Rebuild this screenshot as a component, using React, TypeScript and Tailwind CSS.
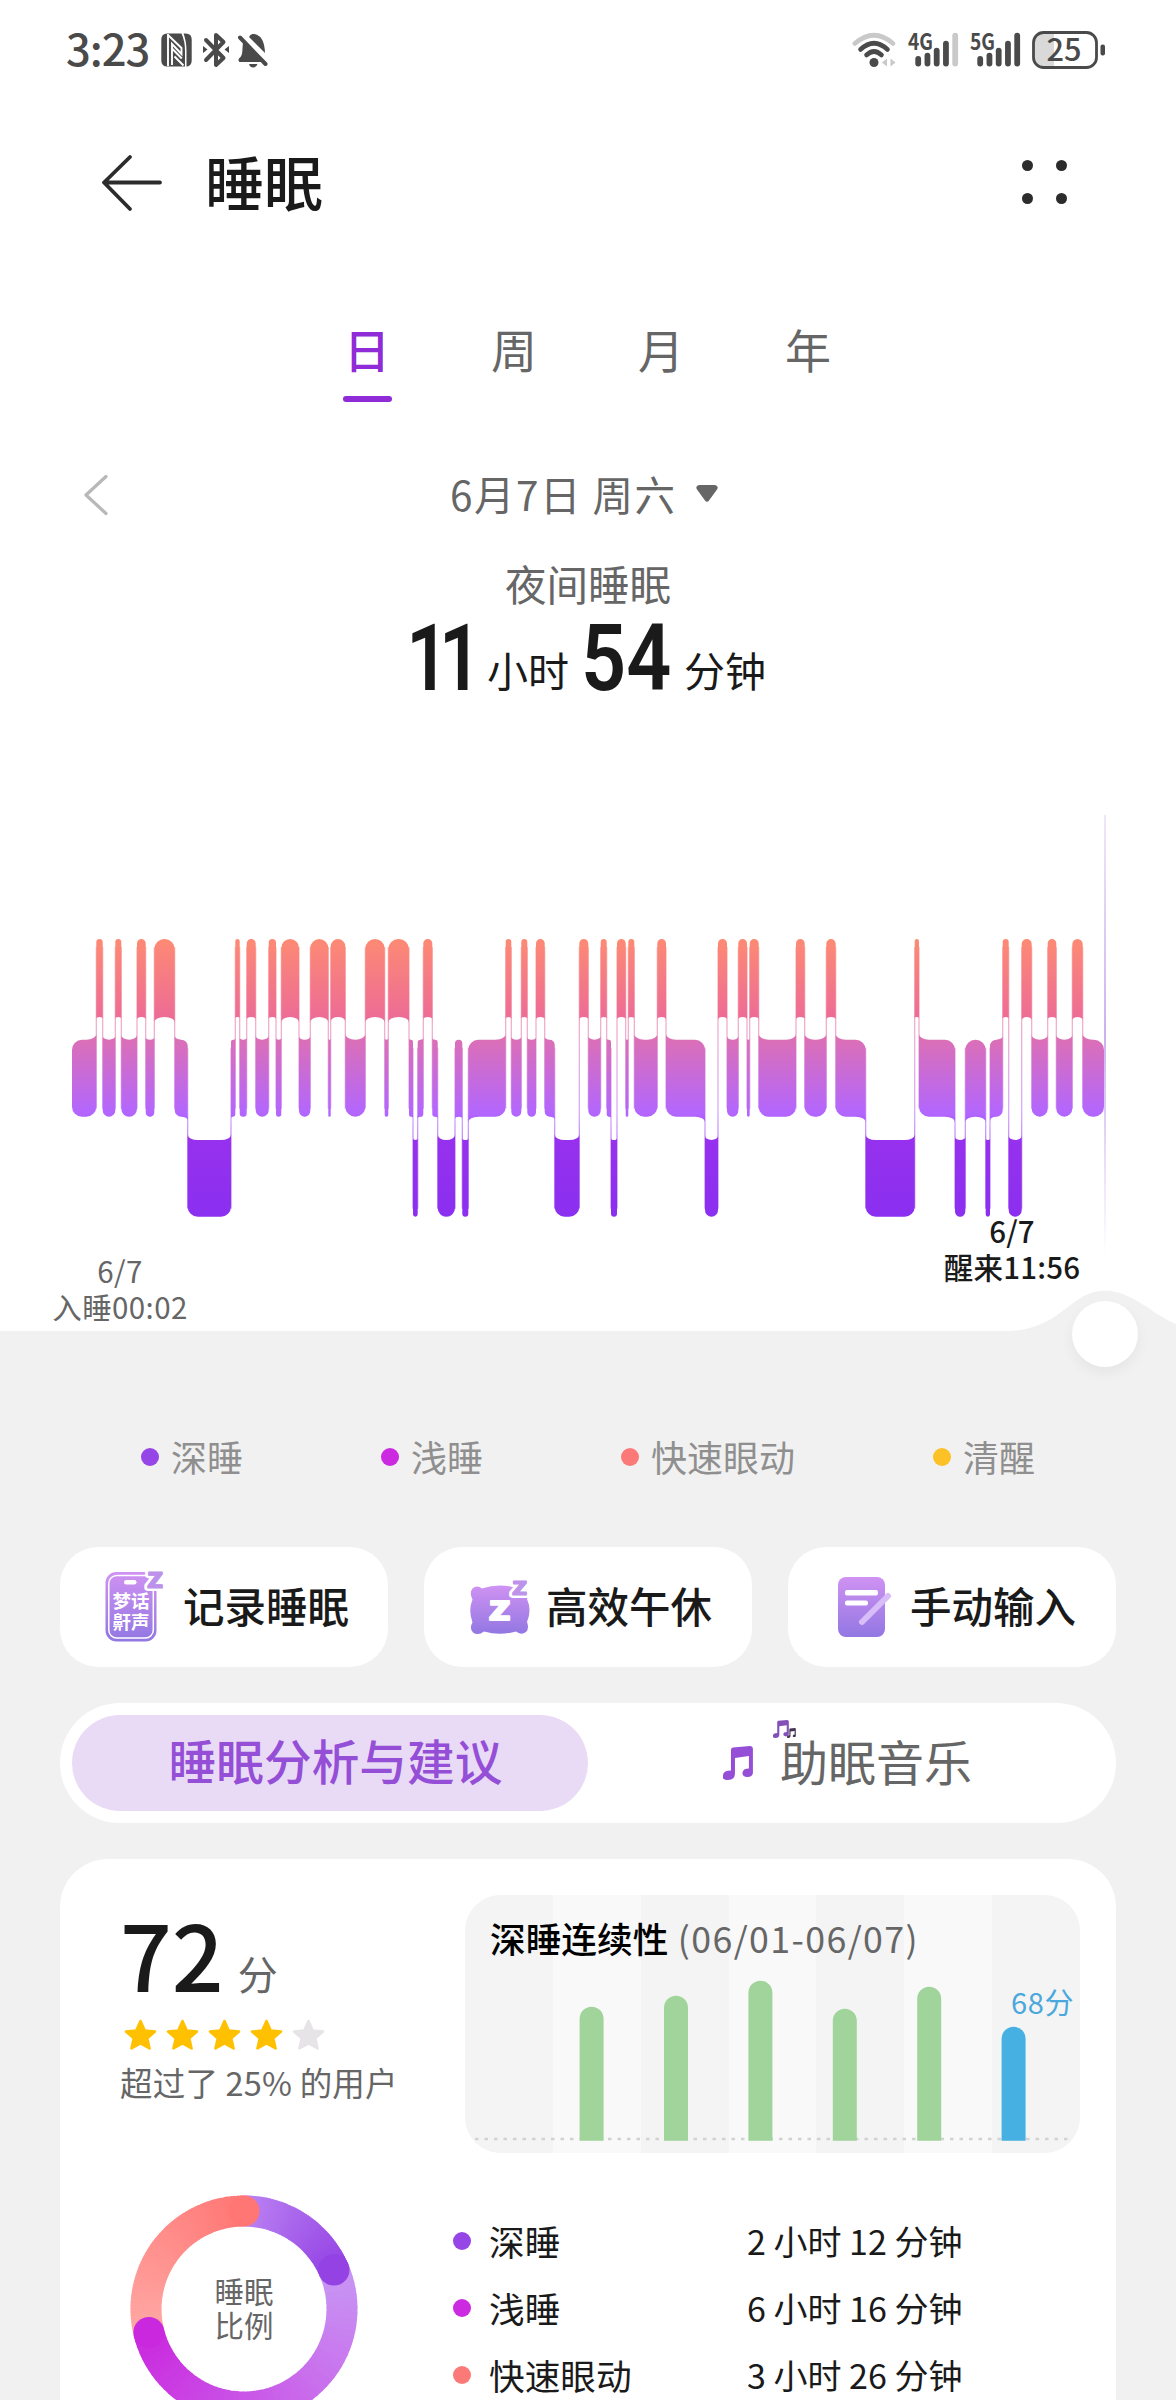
import React from "react";

type Level = "R" | "L" | "D";

const START = 72;

/* Sleep stages through the night: stage and the x where it ends. */
const STAGES: [Level, number][] = [
  ["L", 96.3], ["R", 102.7], ["L", 115.3], ["R", 121.3], ["L", 137], ["R", 145.7], ["L", 154.3], ["R", 174.7],
  ["L", 187.7], ["D", 231], ["L", 235.3], ["R", 239.7], ["L", 246.7], ["R", 255.7], ["L", 268.7], ["R", 276],
  ["L", 281.3], ["R", 299], ["L", 310.3], ["R", 328.3], ["L", 330.7], ["R", 345.3], ["L", 365.3], ["R", 384.7],
  ["L", 388.3], ["R", 409], ["L", 413], ["D", 417.7], ["L", 423.3], ["R", 432.3], ["L", 437.7], ["D", 455],
  ["L", 462.3], ["D", 468.3], ["L", 505.7], ["R", 511.3], ["L", 521.3], ["R", 527.3], ["L", 536], ["R", 544.7],
  ["L", 554.7], ["D", 579.3], ["R", 588.3], ["L", 600.7], ["R", 606.7], ["L", 611], ["D", 617], ["R", 625.7],
  ["L", 628.3], ["R", 634.3], ["L", 657.3], ["R", 666], ["L", 705], ["D", 718], ["R", 727], ["L", 738.3],
  ["R", 747], ["L", 749.7], ["R", 758.7], ["L", 796], ["R", 804.7], ["L", 826.3], ["R", 835.7], ["L", 865.7],
  ["D", 914.7], ["R", 919], ["L", 955], ["D", 965.3], ["L", 985.7], ["D", 990], ["L", 1002.7], ["R", 1008.7],
  ["D", 1021.7], ["R", 1031.7], ["L", 1047.7], ["R", 1056.3], ["L", 1072.3], ["R", 1082.7], ["L", 1104],
];

/* Top, bottom and rank of each stage's band. */
const BAND: Record<Level, [number, number, number]> = {
  R: [19, 97, 2],
  L: [119.7, 196.7, 1],
  D: [220, 296.7, 0],
};

function blockPath(i: number) {
  const [lvl, x1] = STAGES[i];
  const x0 = i === 0 ? START : STAGES[i - 1][1];
  const [t, b, rank] = BAND[lvl];
  const left = i === 0 ? null : BAND[STAGES[i - 1][0]][2];
  const right = i === STAGES.length - 1 ? null : BAND[STAGES[i + 1][0]][2];
  const r = Math.min(10, (x1 - x0) / 2);
  const f = Math.min(5.5, r * 0.6);
  const leftUp = left !== null && left > rank;
  const rightUp = right !== null && right > rank;
  const leftDown = left !== null && left < rank;
  const rightDown = right !== null && right < rank;
  const arc = (flare: boolean, x: number, y: number) => `A${r},${flare ? f : r} 0 0 ${flare ? 0 : 1} ${x},${y}`;
  return [
    `M${x0},${leftUp ? t - f : t + r}`,
    arc(leftUp, x0 + r, t),
    `L${x1 - r},${t}`,
    arc(rightUp, x1, rightUp ? t - f : t + r),
    `L${x1},${rightDown ? b + f : b - r}`,
    arc(rightDown, x1 - r, b),
    `L${x0 + r},${b}`,
    arc(leftDown, x0, leftDown ? b + f : b - r),
    "Z",
  ].join(" ");
}

function SleepChart() {
  return (
    <svg width="1176" height="350" viewBox="0 0 1176 350" className="block">
      <defs>
        <linearGradient id="night" gradientUnits="userSpaceOnUse" x1="0" y1="19" x2="0" y2="297">
          <stop offset="0" stopColor="#fd8a74" />
          <stop offset="0.28" stopColor="#ed6c95" />
          <stop offset="0.37" stopColor="#da6fb9" />
          <stop offset="0.63" stopColor="#b266ff" />
          <stop offset="0.72" stopColor="#9631ee" />
          <stop offset="1" stopColor="#8b2ff0" />
        </linearGradient>
      </defs>
      {STAGES.slice(0, -1).map(([lvl, x], i) => {
        const a = BAND[lvl];
        const b = BAND[STAGES[i + 1][0]];
        return (
          <rect
            key={i}
            x={x - 0.6}
            y={Math.min(a[0], b[0]) + 8}
            width="1.2"
            height={Math.max(a[1], b[1]) - Math.min(a[0], b[0]) - 16}
            fill="url(#night)"
            opacity="0.6"
          />
        );
      })}
      {STAGES.map((_, i) => (
        <path key={i} d={blockPath(i)} fill="url(#night)" />
      ))}
    </svg>
  );
}

function Signal({ label, weak }: { label: string; weak?: boolean }) {
  const tops = [24, 20.7, 15.7, 8.7, 0.7];
  return (
    <svg width="52" height="36" viewBox="0 0 52 36" className="block overflow-visible">
      <text x="0" y="17.5" fontSize="23" fontWeight="700" textLength="25" lengthAdjust="spacingAndGlyphs" fill="#4a4a4a">
        {label}
      </text>
      {tops.map((t, i) => (
        <rect key={i} x={7.3 + i * 9.25} y={t} width="5.8" height={34.5 - t} rx="2.9" fill={weak && i === 4 ? "#c9c9c9" : "#4a4a4a"} />
      ))}
    </svg>
  );
}

function StatusBar() {
  return (
    <div className="flex h-[100px] items-center pl-[66px] text-[#4a4a4a]">
      <span className="-mt-[4px] w-[95px] text-[43.5px] leading-[60px] font-medium tracking-[-1px]">3:23</span>
      <svg width="31" height="34" viewBox="0 0 31 34" className="block shrink-0">
        <path d="M6.300 .5H20.500Q24 8 24 18V33.500H6.300Q.3 33.500 .3 27.500V6.500Q.3 .5 6.300 .5Z" fill="#4a4a4a" />
        <path d="M22.500 .5H24.700Q30.700 .5 30.700 6.500V27.500Q30.700 33.500 24.700 33.500H25.500V18Q25.500 8 22.500 .5Z" fill="#4a4a4a" />
        <path d="M7 1V33M7.500 2.500 20.500 15V21L11 11V32M11 15.500 20.800 25.500M13.500 23.500 22.500 32.500" stroke="#fff" strokeWidth="1.900" fill="none" />
      </svg>
      <svg width="26" height="36" viewBox="0 0 26 36" className="ml-[11px] block shrink-0">
        <path d="M3 8 20.500 26 13 33V3l7.500 7L3 28" fill="none" stroke="#4a4a4a" strokeWidth="4" strokeLinejoin="round" strokeLinecap="round" />
        <path d="M0 14v7l4.500-3.500ZM26 14v7l-4.500-3.500Z" fill="#4a4a4a" />
      </svg>
      <svg width="30" height="36" viewBox="0 0 30 36" className="ml-[9px] block shrink-0">
        <path d="M11 5q1-2.500 3.500-3h2q10 2 10.500 19Z" fill="#4a4a4a" />
        <path d="M5 10l20 20H1.500q-2.500-2.500 1-5 2-2.500 2-9Z" fill="#4a4a4a" />
        <path d="M2 5.500 27.500 32" stroke="#4a4a4a" strokeWidth="4" strokeLinecap="round" />
        <path d="M11 32h8.500q-1 3.500-4.250 3.500T11 32Z" fill="#4a4a4a" />
      </svg>
      <div className="ml-auto flex items-center pr-[70px]">
        <svg width="45" height="36" viewBox="0 0 45 36" className="block">
          <g fill="none" strokeLinecap="round" strokeWidth="4.600">
            <path d="M2.800 11.500Q22 -5 41 11.500" stroke="#c9c9c9" />
            <path d="M8.500 17.500Q22 5 35.500 17.500" stroke="#4a4a4a" />
            <path d="M14.500 23Q22 16 29.500 23" stroke="#4a4a4a" />
          </g>
          <circle cx="22" cy="30.500" r="4.500" fill="#4a4a4a" />
          <path d="M35 26.500v8l-5-4ZM38.500 26.500v8l5-4Z" fill="#c9c9c9" />
        </svg>
        <div className="ml-[11px] flex gap-[10px]">
          <Signal label="4G" weak />
          <Signal label="5G" />
        </div>
        <svg width="74" height="38" viewBox="0 0 74 38" className="ml-[10px] block overflow-visible">
          <path d="M11 1.500H22V36.500H11Q1.500 36.500 1.500 27V11Q1.500 1.500 11 1.500Z" fill="#d9d9d9" />
          <rect x="1.500" y="1.500" width="63" height="35" rx="10" fill="none" stroke="#4a4a4a" strokeWidth="2.800" />
          <rect x="68.500" y="13.500" width="4.500" height="11" rx="2" fill="#4a4a4a" />
          <text x="14.500" y="30" fontSize="31" fontWeight="500" textLength="35" lengthAdjust="spacingAndGlyphs" fill="#4a4a4a">
            25
          </text>
        </svg>
      </div>
    </div>
  );
}

function Header() {
  return (
    <header className="flex h-[168px] items-center pr-[109px] pl-[101px]">
      <svg width="62" height="58" viewBox="0 0 62 58" className="-mt-[2px] block">
        <path d="M3 28.500H59M29 3 3 28.500 29 55" fill="none" stroke="#2c2c2c" strokeWidth="3.800" strokeLinecap="round" strokeLinejoin="round" />
      </svg>
      <h1 className="-mt-[7px] ml-[42px] text-[59px] leading-[80px] font-medium text-[#1a1a1a]">睡眠</h1>
      <div className="ml-auto grid -translate-y-[2px] grid-cols-2 gap-x-[23.500px] gap-y-[22px]">
        {[0, 1, 2, 3].map((i) => (
          <span key={i} className="size-[11px] rounded-full bg-[#2c2c2c]" />
        ))}
      </div>
    </header>
  );
}

function Tabs() {
  return (
    <nav className="flex h-[152px] justify-center pt-[46px] pr-[1px]">
      {["日", "周", "月", "年"].map((t, i) => (
        <div key={t} className="flex w-[147px] flex-col items-center">
          <span className={i === 0 ? "text-[46px] leading-[68px] font-medium text-[#8f2cd8]" : "text-[46px] leading-[68px] text-[#666]"}>{t}</span>
          {i === 0 && <span className="mt-[14px] h-[6px] w-[49px] rounded-full bg-[#8f2cd8]" />}
        </div>
      ))}
    </nav>
  );
}

function Summary() {
  return (
    <section className="h-[380px]">
      <div className="flex h-[148px] items-center pl-[83px]">
        <svg width="26" height="42" viewBox="0 0 26 42" className="mt-px block">
          <path d="M23 2.500 3 21 23 39.500" fill="none" stroke="#b8b8b8" strokeWidth="3.200" strokeLinecap="round" strokeLinejoin="round" />
        </svg>
        <span className="ml-[341px] text-[40.500px] leading-[60px] tracking-[1.5px] text-[#666]">6月7日 周六</span>
        <svg width="22" height="17" viewBox="0 0 22 17" className="-mt-[2px] ml-[19px] block">
          <path d="M3 0h16q4 1 2 4.500l-8 11q-2 2.500-4 0l-8-11Q-1 1 3 0Z" fill="#666" />
        </svg>
      </div>
      <div className="-mt-[15px] text-center text-[41.500px] leading-[60px] text-[#666]">夜间睡眠</div>
      <div className="mt-[2px] flex h-[84px] items-end pl-[403px] text-[41px] leading-[60px] text-[#1a1a1a]">
        <span className="h-[80px] w-[84px] origin-left scale-x-[0.8] pl-[4px] font-[Roboto] text-[93px] leading-[80px] font-semibold tracking-[-12px]">11</span>
        <span className="w-[94px]">小时</span>
        <span className="h-[80px] w-[103px] origin-left scale-x-[0.85] font-[Roboto] text-[93px] leading-[80px] font-semibold">54</span>
        <span>分钟</span>
      </div>
    </section>
  );
}

function Timeline() {
  return (
    <section className="relative h-[531px]">
      <div className="pt-[120px]">
        <SleepChart />
      </div>
      <div className="absolute top-[15px] left-[1104px] h-[440px] w-[2px] bg-linear-to-b from-[#efe8f7] via-[#cdb0ee] to-white" />
      <div className="absolute top-[452px] left-[20px] w-[200px] text-center text-[29.500px] leading-[36px] tracking-[0.4px] text-[#666]">
        6/7
        <br />
        入睡00:02
      </div>
      <div className="absolute top-[412px] left-[912px] w-[200px] text-center text-[29.500px] leading-[36px] font-medium tracking-[0.2px] text-[#1a1a1a]">
        6/7
        <br />
        醒来11:56
      </div>
      <svg width="190" height="42" viewBox="0 0 190 42" className="absolute top-[490px] left-[986px]">
        <path d="M14 41.500C78 41.500 82 .7 119 .7C146 .7 166 24 190 34V42H0Z" fill="#f1f1f1" />
      </svg>
      <div className="absolute top-[501px] left-[1072px] size-[66px] rounded-full bg-white shadow-[0_6px_14px_rgba(0,0,0,0.05)]" />
    </section>
  );
}

function Legend() {
  const items = [
    { label: "深睡", dot: "bg-[#9645e6]", w: "w-[240px]" },
    { label: "浅睡", dot: "bg-[#cb2ae0]", w: "w-[240px]" },
    { label: "快速眼动", dot: "bg-[#fb7a78]", w: "w-[312px]" },
    { label: "清醒", dot: "bg-[#fcc127]", w: "w-[200px]" },
  ];
  return (
    <div className="flex h-[216px] pt-[96px] pl-[141px]">
      {items.map((it) => (
        <div key={it.label} className={`flex h-[60px] items-center ${it.w}`}>
          <span className={`size-[18px] rounded-full ${it.dot}`} />
          <span className="-mt-[3px] ml-[12px] text-[36px] leading-[56px] text-[#8f8f8f]">{it.label}</span>
        </div>
      ))}
    </div>
  );
}

function IconGradient({ id }: { id: string }) {
  return (
    <linearGradient id={id} x1="0" y1="0" x2="0" y2="1">
      <stop offset="0" stopColor="#cf92f2" />
      <stop offset="1" stopColor="#9277e2" />
    </linearGradient>
  );
}

function RecordIcon() {
  return (
    <svg width="60" height="72" viewBox="0 0 60 72" className="block overflow-visible">
      <defs><IconGradient id="rec" /></defs>
      <rect x="0.500" y="1" width="51" height="69.500" rx="11" fill="url(#rec)" />
      <rect x="3.800" y="4.500" width="44.500" height="62.500" rx="8" fill="none" stroke="#fff" strokeWidth="1.500" />
      <rect x="19" y="9" width="12.500" height="4.500" rx="2.250" fill="#fff" />
      <g fill="#fff" fontWeight="700" fontSize="18.500">
        <text x="7.500" y="37" textLength="37">梦话</text>
        <text x="7.500" y="58" textLength="37">鼾声</text>
      </g>
      <text x="42" y="17" fontSize="21" fontWeight="900" fill="#bd92ea" stroke="#fff" strokeWidth="6" strokeLinejoin="round" paintOrder="stroke" textLength="16" lengthAdjust="spacingAndGlyphs">Z</text>
      <text x="42" y="17" fontSize="21" fontWeight="900" fill="#bd92ea" stroke="#bd92ea" strokeWidth="1.200" strokeLinejoin="round" textLength="16" lengthAdjust="spacingAndGlyphs" aria-hidden="true">Z</text>
    </svg>
  );
}

function PillowIcon() {
  return (
    <svg width="62" height="64" viewBox="0 0 62 64" className="block overflow-visible">
      <defs><IconGradient id="pil" /></defs>
      <path
        d="M13 15.500Q31 9.500 49 15.500Q55 13 58 17Q60 21 58 26Q63 37 58 49Q60.500 55 57 59Q52 62.500 47 58.500Q31 63 15 58.500Q9 63 4 59.500Q0 55 3.500 49.500Q-1 37 3.500 26.500Q0 20 3.500 15.500Q8 11.500 13 15.500Z"
        fill="url(#pil)"
      />
      <text x="20" y="46.500" fontSize="25" fontWeight="900" fill="#fff" stroke="#fff" strokeWidth="2" strokeLinejoin="round" textLength="21" lengthAdjust="spacingAndGlyphs">Z</text>
      <text x="43" y="21.500" fontSize="19" fontWeight="900" fill="#bd92ea" stroke="#fff" strokeWidth="6" strokeLinejoin="round" paintOrder="stroke" textLength="15" lengthAdjust="spacingAndGlyphs">Z</text>
      <text x="43" y="21.500" fontSize="19" fontWeight="900" fill="#bd92ea" stroke="#bd92ea" strokeWidth="1.200" strokeLinejoin="round" textLength="15" lengthAdjust="spacingAndGlyphs" aria-hidden="true">Z</text>
    </svg>
  );
}

function NoteIcon() {
  return (
    <svg width="54" height="66" viewBox="0 0 54 66" className="block">
      <defs><IconGradient id="note" /></defs>
      <rect y="3" width="47" height="60" rx="8" fill="url(#note)" />
      <rect x="7" y="16" width="33" height="5.500" rx="2" fill="#fff" />
      <rect x="7" y="26.500" width="23" height="5" rx="2" fill="#fff" />
      <path d="M24 48 50 22" stroke="#d9bdf8" strokeWidth="6" strokeLinecap="round" />
    </svg>
  );
}

function Actions() {
  return (
    <div className="mx-[60px] grid h-[120px] grid-cols-3 gap-[36px] text-[41.500px] leading-[60px] font-medium text-[#1a1a1a]">
      <div className="flex items-center rounded-[38px] bg-white pl-[45px]">
        <RecordIcon />
        <span className="-mt-[4px] ml-[18px]">记录睡眠</span>
      </div>
      <div className="flex items-center rounded-[38px] bg-white pl-[45px]">
        <div className="-mt-[5px]"><PillowIcon /></div>
        <span className="-mt-[4px] ml-[15px]">高效午休</span>
      </div>
      <div className="flex items-center rounded-[38px] bg-white pl-[50px]">
        <NoteIcon />
        <span className="-mt-[4px] ml-[18px]">手动输入</span>
      </div>
    </div>
  );
}

function Note({ size, className, color }: { size: number; className?: string; color: string }) {
  return (
    <svg width={size * 0.88} height={size} viewBox="0 0 30 34" className={className}>
      <path d="M8 4Q8 2 10 1.500L27 0Q30 0 30 3V27Q29.500 31 24.500 31T19.500 27Q20 22.500 26 22.500V10L12 12V28Q11.500 34 5 34T0 29.500Q0 24.500 8 24.500Z" fill={color} />
    </svg>
  );
}

function Segmented() {
  return (
    <div className="mx-[60px] mt-[36px] flex h-[120px] rounded-full bg-white p-[12px] text-[48px] leading-[70px]">
      <div className="flex w-[516px] items-center justify-center rounded-full bg-[#e9dbf6] pb-[6px] pl-[11px] text-[47.700px] font-medium text-[#954fd6]">睡眠分析与建议</div>
      <div className="relative flex flex-1 items-center pb-[6px] pl-[135px] text-[#666]">
        <Note size={34} color="#954fd6" className="mt-[5px] block" />
        <span className="ml-[27px]">助眠音乐</span>
        <Note size={18} color="#8450b8" className="absolute top-[5px] left-[185px]" />
        <Note size={10} color="#43344f" className="absolute top-[13px] left-[199px]" />
      </div>
    </div>
  );
}

function Star({ on }: { on: boolean }) {
  return (
    <svg width="33" height="32" viewBox="0 0 33 32" className="block">
      <path
        d="M16.500 2 20.800 11.500 31 12.600 23.300 19.400 25.600 29.500 16.500 24.300 7.400 29.500 9.700 19.400 2 12.600 12.200 11.500Z"
        fill={on ? "#ffc000" : "#e6e4e6"}
        stroke={on ? "#ffc000" : "#e6e4e6"}
        strokeWidth="2.500"
        strokeLinejoin="round"
      />
    </svg>
  );
}

function Score() {
  return (
    <div className="w-[405px] pl-[60px]">
      <div className="mt-[37px] flex h-[112px] items-baseline leading-[112px]">
        <span className="text-[91px] font-medium text-[#1a1a1a]">72</span>
        <span className="ml-[14px] -translate-y-[2px] text-[40px] text-[#666]">分</span>
      </div>
      <div className="mt-[11px] flex gap-[9px] pl-[4px]">
        {[1, 2, 3, 4, 5].map((n) => (
          <Star key={n} on={n <= 4} />
        ))}
      </div>
      <div className="mt-[7px] text-[32.500px] leading-[48px] tracking-[0.2px] whitespace-nowrap text-[#666]">超过了 25% 的用户</div>
    </div>
  );
}

function Continuity() {
  const bars = [0, 134, 145, 160, 132, 154, 114];
  return (
    <div className="relative mt-[36px] h-[258px] w-[615px] overflow-hidden rounded-[36px] bg-[#f4f4f4]">
      <div className="grid h-full grid-cols-7">
        {bars.map((_, i) => (
          <span key={i} className={i % 2 ? "bg-[#f9f9f9]" : "bg-[#f4f4f4]"} />
        ))}
      </div>
      <svg width="615" height="258" viewBox="0 0 615 258" className="absolute inset-0">
        <path d="M10 244H608" stroke="#d2d2d2" strokeWidth="2.500" strokeDasharray="3.500 6" />
        {bars.map((h, i) =>
          h ? (
            <path
              key={i}
              d={`M${30.2 + i * 84.4},245.700v${-(h - 12)}a12,12 0 0 1 24,0v${h - 12}Z`}
              fill={i === 6 ? "#46b0e2" : "#a0d49b"}
            />
          ) : null,
        )}
      </svg>
      <div className="absolute top-[17px] left-[25px] text-[35.700px] leading-[52px] whitespace-nowrap text-[#666]">
        <span className="font-medium text-black">深睡连续性</span>
        <span className="tracking-[1.4px]"> (06/01-06/07)</span>
      </div>
      <div className="absolute top-[85px] right-[6px] text-[29px] leading-[42px] tracking-[0.6px] text-[#4aa8dc]">68分</div>
    </div>
  );
}

const DONUT = [
  { from: 256.1, to: 360, a: [255, 168, 164], b: [255, 118, 116] },
  { from: 0, to: 66.6, a: [186, 130, 242], b: [148, 66, 228] },
  { from: 66.6, to: 256.1, a: [200, 150, 244], b: [202, 40, 222] },
];

function point(deg: number) {
  const r = (deg * Math.PI) / 180;
  return [114 + 98 * Math.sin(r), 114 - 98 * Math.cos(r)];
}

function Arc({ seg }: { seg: (typeof DONUT)[number] }) {
  const n = 60;
  const span = seg.to - seg.from;
  const color = (k: number) => `rgb(${seg.a.map((v, i) => Math.round(v + (seg.b[i] - v) * k)).join(",")})`;
  const [ex, ey] = point(seg.to);
  return (
    <g>
      {Array.from({ length: n }, (_, i) => {
        const k = i / n;
        const [x0, y0] = point(seg.from + span * k);
        const [x1, y1] = point(Math.min(seg.to, seg.from + span * (k + 1 / n) + 0.6));
        return <path key={i} d={`M${x0},${y0}A98,98 0 0 1 ${x1},${y1}`} stroke={color(k)} strokeWidth="31" fill="none" />;
      })}
      <circle cx={ex} cy={ey} r="15.500" fill={color(1)} />
    </g>
  );
}

function Donut() {
  const [capX, capY] = point(66.6);
  return (
    <div className="relative size-[228px]">
      <svg width="228" height="228" viewBox="0 0 228 228" className="block">
        <Arc seg={DONUT[1]} />
        <Arc seg={DONUT[0]} />
        <Arc seg={DONUT[2]} />
        <circle cx={capX} cy={capY} r="15.500" fill="rgb(148,66,228)" />
      </svg>
      <div className="absolute inset-0 flex items-center justify-center pb-[4px] text-center text-[29.500px] leading-[34.500px] text-[#666]">
        睡眠
        <br />
        比例
      </div>
    </div>
  );
}

function Breakdown() {
  const rows = [
    { name: "深睡", dot: "bg-[#9645e6]", time: "2 小时 12 分钟" },
    { name: "浅睡", dot: "bg-[#cb2ae0]", time: "6 小时 16 分钟" },
    { name: "快速眼动", dot: "bg-[#fb7a78]", time: "3 小时 26 分钟" },
  ];
  return (
    <div className="flex pl-[70px]">
      <div className="pt-[42px]">
        <Donut />
      </div>
      <div className="ml-[95px] flex-1 pt-[54px]">
        {rows.map((r) => (
          <div key={r.name} className="flex h-[67px] items-center text-[#1a1a1a]">
            <span className={`size-[18px] rounded-full ${r.dot}`} />
            <span className="ml-[18px] w-[258px] text-[35.700px] leading-[54px]">{r.name}</span>
            <span className="text-[34px] leading-[54px]">{r.time}</span>
          </div>
        ))}
      </div>
    </div>
  );
}

export default function App() {
  return (
    <div
      lang="zh-CN"
      className="h-[2400px] w-[1176px] overflow-hidden bg-[#f1f1f1] font-['Noto_Sans_CJK_SC','Noto_Sans',sans-serif]"
    >
      <div className="bg-white">
        <StatusBar />
        <Header />
        <Tabs />
        <Summary />
        <Timeline />
      </div>
      <Legend />
      <Actions />
      <Segmented />
      <section className="mx-[60px] mt-[36px] h-[600px] rounded-[48px] bg-white">
        <div className="flex h-[294px]">
          <Score />
          <Continuity />
        </div>
        <Breakdown />
      </section>
    </div>
  );
}
